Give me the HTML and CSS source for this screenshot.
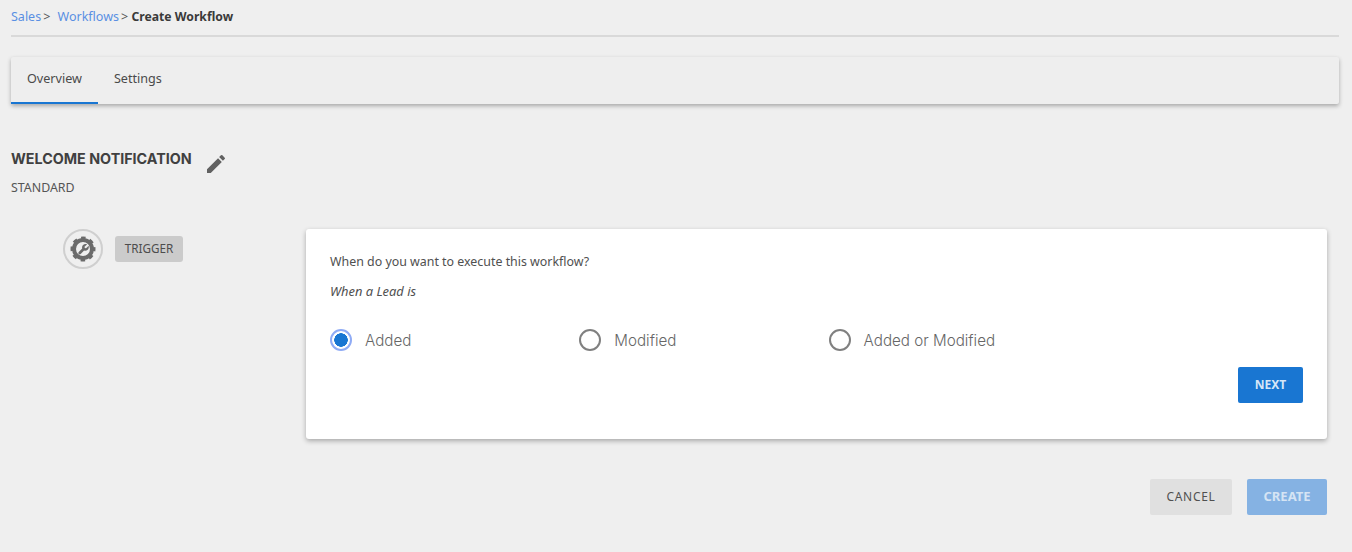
FILE: index.html
```html
<!DOCTYPE html>
<html lang="en">
<head>
    <meta charset="UTF-8">
    <title>Create Workflow</title>
    <link rel="stylesheet" href="styles.css">
</head>
<body>
    <div class="page">
        <div class="breadcrumb">
            <a href="#">Sales</a><span class="sep">&gt;</span>
            <a href="#" class="second">Workflows</a><span class="sep">&gt;</span>
            <strong>Create Workflow</strong>
        </div>

        <div class="tabs">
            <a href="#" class="tab active">Overview</a>
            <a href="#" class="tab">Settings</a>
        </div>

        <div class="title-row">
            <h1>WELCOME NOTIFICATION</h1>
            <svg class="edit-icon" width="24" height="24" viewBox="0 0 24 24">
                <path fill="#616161" d="M3 17.25V21h3.75L17.81 9.94l-3.75-3.75L3 17.25zM20.71 7.04a1 1 0 0 0 0-1.41l-2.34-2.34a1 1 0 0 0-1.41 0l-1.83 1.83 3.75 3.75 1.83-1.83z"/>
            </svg>
        </div>
        <div class="subtitle">STANDARD</div>

        <div class="builder">
            <div class="step-side">
                <div class="step-icon">
                    <svg width="26" height="26" viewBox="0 0 26 26">
                        <!-- gear: thick ring plus dashed outer ring for the teeth -->
                        <circle cx="13" cy="13" r="9" fill="none" stroke="#6b6b6b" stroke-width="4"/>
                        <circle cx="13" cy="13" r="11" fill="none" stroke="#6b6b6b" stroke-width="3" stroke-dasharray="4.4 4.24" stroke-dashoffset="2.2"/>
                        <!-- wrench -->
                        <path fill="#6b6b6b" d="M17.2 8.2l-2.7 2.6.3 1.2 1.2.3 2.7-2.6c.4 1.5 0 3-1 4-1 .9-2.3 1.2-3.6.8l-3.4 3.5c-.6.6-1.4.6-2 0-.5-.5-.5-1.4 0-1.9l3.5-3.5c-.4-1.3-.1-2.7.9-3.7 1-1 2.5-1.3 3.9-.7z"/>
                    </svg>
                </div>
                <span class="step-tag">TRIGGER</span>
            </div>

            <div class="card">
                <p class="question">When do you want to execute this workflow?</p>
                <p class="hint">When a Lead is</p>
                <div class="radios">
                    <label class="radio checked"><span class="dot"></span>Added</label>
                    <label class="radio"><span class="dot"></span>Modified</label>
                    <label class="radio"><span class="dot"></span>Added or Modified</label>
                </div>
                <div class="card-actions">
                    <button class="btn primary">NEXT</button>
                </div>
            </div>
        </div>

        <div class="footer-actions">
            <button class="btn cancel">CANCEL</button>
            <button class="btn create">CREATE</button>
        </div>
    </div>
</body>
</html>
```

FILE: styles.css
```css
html, body {
    margin: 0;
    background: #efefef;
}
body {
    font-family: "Noto Sans", "Open Sans", Arial, sans-serif;
    color: #333;
    height: 552px;
    overflow: hidden;
}
.page {
    padding: 0 13px 0 11px;
}
.breadcrumb {
    box-sizing: border-box;
    height: 37px;
    padding-top: 8px;
    font-size: 12.5px;
    line-height: 17px;
    border-bottom: 2px solid #d9d9d9;
    color: #555;
}
.breadcrumb a {
    color: #5a8fe3;
    text-decoration: none;
}
.breadcrumb .second {
    margin-left: 4px;
}
.breadcrumb .sep {
    margin-left: 2px;
}
.breadcrumb strong {
    color: #3a3a3a;
    font-size: 12.2px;
}
.tabs {
    display: flex;
    margin-top: 20px;
    height: 47px;
    background: #eeeeee;
    box-shadow: 0 2px 4px rgba(0, 0, 0, 0.3);
    border-radius: 2px;
}
.tab {
    box-sizing: border-box;
    height: 47px;
    padding: 13px 16px 0;
    font-size: 12.6px;
    line-height: 17px;
    color: #4a4a4a;
    text-decoration: none;
}
.tab.active {
    border-bottom: 2px solid #1976d2;
}
.title-row {
    display: flex;
    align-items: flex-start;
    margin-top: 47px;
    height: 29px;
}
h1 {
    margin: 0;
    font-family: Inter, "Noto Sans", sans-serif;
    font-size: 14.3px;
    font-weight: 700;
    line-height: 16px;
    color: #404040;
}
.edit-icon {
    margin: 1px 0 0 12px;
}
.subtitle {
    font-size: 12.4px;
    line-height: 16px;
    color: #555;
}
.builder {
    display: flex;
    align-items: flex-start;
    margin-top: 33px;
}
.step-side {
    display: flex;
    align-items: center;
    width: 295px;
    box-sizing: border-box;
    padding: 0 0 0 52px;
}
.step-icon {
    box-sizing: border-box;
    width: 40px;
    height: 40px;
    border: 2px solid #cfcfcf;
    border-radius: 50%;
    display: flex;
    align-items: center;
    justify-content: center;
}
.step-tag {
    box-sizing: border-box;
    margin: 0 0 0 12px;
    width: 68px;
    height: 26px;
    padding-bottom: 1px;
    line-height: 25px;
    text-align: center;
    background: #cbcbcb;
    border-radius: 3px;
    font-size: 11.7px;
    color: #4d4d4d;
}
.card {
    box-sizing: border-box;
    width: 1021px;
    height: 210px;
    padding: 24px 24px 0;
    background: #fff;
    border-radius: 3px;
    box-shadow: 0 2px 5px rgba(0, 0, 0, 0.3);
}
.question {
    margin: 0;
    font-size: 12.4px;
    line-height: 17px;
    color: #505050;
}
.hint {
    margin: 13px 0 0;
    font-size: 12.9px;
    line-height: 17px;
    font-style: italic;
    color: #505050;
}
.radios {
    display: flex;
    margin-top: 28px;
}
.radio {
    display: flex;
    align-items: center;
    width: 249.3px;
    height: 24px;
    font-family: Inter, "Noto Sans", sans-serif;
    font-size: 15.2px;
    font-weight: 300;
    color: #666;
}
.dot {
    box-sizing: border-box;
    width: 22px;
    height: 22px;
    margin-right: 13px;
    border: 2px solid #808080;
    border-radius: 50%;
    background: #fff;
}
.radio.checked .dot {
    border-color: #8fabf5;
    background: radial-gradient(circle, #1976d2 0 6.5px, #fff 7px);
}
.card-actions {
    display: flex;
    justify-content: flex-end;
    margin-top: 15px;
}
.btn {
    box-sizing: border-box;
    height: 36px;
    padding: 0 0 2px;
    border: 0;
    border-radius: 2px;
    font-family: "Noto Sans", "Open Sans", Arial, sans-serif;
    font-size: 12px;
}
.primary {
    width: 65px;
    background: #1976d2;
    color: #d5e6f7;
    font-weight: 700;
}
.footer-actions {
    display: flex;
    justify-content: flex-end;
    gap: 15px;
    margin: 40px 12px 0 0;
}
.cancel {
    width: 82px;
    background: #e0e0e0;
    color: #505050;
    letter-spacing: 0.7px;
}
.create {
    width: 80px;
    background: #85b2e3;
    color: #d5e4f4;
    font-size: 13px;
    font-weight: 700;
}
```
